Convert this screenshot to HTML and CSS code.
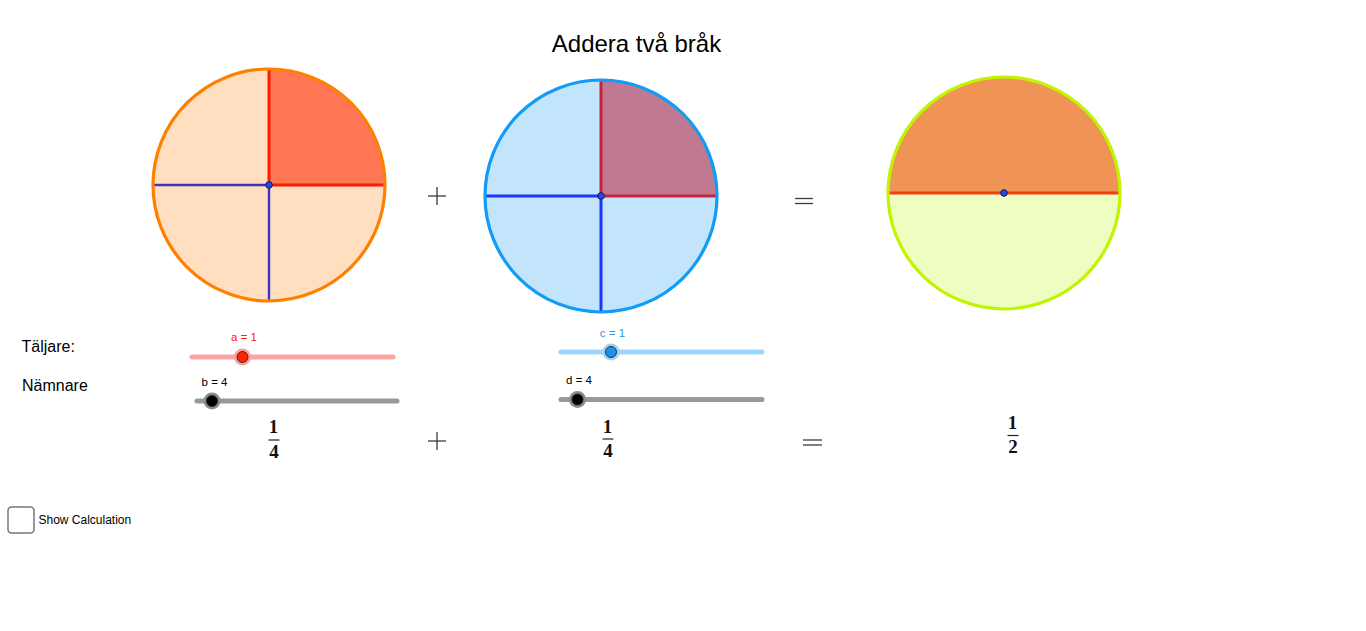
FILE: index.html
```html
<!DOCTYPE html>
<html lang="sv">
<head>
<meta charset="utf-8">
<title>Addera två bråk</title>
<link rel="stylesheet" href="styles.css">
</head>
<body>
<main class="applet">
<svg class="canvas" viewBox="0 0 1366 631" width="1366" height="631" xmlns="http://www.w3.org/2000/svg">
  <text class="title" x="636.5" y="52">Addera två bråk</text>

  <!-- Circle 1: a/b -->
  <g class="c1">
    <circle class="fill" cx="269" cy="185" r="116"/>
    <path class="sector" d="M269 185 L269 69 A116 116 0 0 1 385 185 Z"/>
    <line class="red" x1="269" y1="185" x2="269" y2="70"/>
    <line class="red" x1="269" y1="185" x2="384" y2="185"/>
    <line class="blue" x1="269" y1="185" x2="154" y2="185"/>
    <line class="blue" x1="269" y1="185" x2="269" y2="300"/>
    <circle class="rim" cx="269" cy="185" r="116"/>
    <circle class="pt" cx="269" cy="185" r="3.3"/>
  </g>

  <!-- Circle 2: c/d -->
  <g class="c2">
    <circle class="fill" cx="601" cy="196" r="116"/>
    <path class="sector" d="M601 196 L601 80 A116 116 0 0 1 717 196 Z"/>
    <line class="red" x1="601" y1="196" x2="601" y2="81"/>
    <line class="red" x1="601" y1="196" x2="716" y2="196"/>
    <line class="blue" x1="601" y1="196" x2="486" y2="196"/>
    <line class="blue" x1="601" y1="196" x2="601" y2="311"/>
    <circle class="rim" cx="601" cy="196" r="116"/>
    <circle class="pt" cx="601" cy="196" r="3.3"/>
  </g>

  <!-- Circle 3: sum -->
  <g class="c3">
    <circle class="fill" cx="1004" cy="193" r="116"/>
    <path class="sector" d="M888 193 A116 116 0 0 1 1120 193 Z"/>
    <line class="red" x1="889" y1="193" x2="1119" y2="193"/>
    <circle class="rim" cx="1004" cy="193" r="116"/>
    <circle class="pt" cx="1004" cy="193" r="3.3"/>
  </g>

  <!-- operators -->
  <g class="op">
    <line x1="428" y1="196" x2="446" y2="196"/>
    <line x1="437" y1="187" x2="437" y2="205"/>
    <line x1="795" y1="198.5" x2="813" y2="198.5"/>
    <line x1="795" y1="203.5" x2="813" y2="203.5"/>
    <line x1="428" y1="441" x2="446" y2="441"/>
    <line x1="437" y1="432" x2="437" y2="450"/>
    <line x1="803" y1="440" x2="822" y2="440"/>
    <line x1="803" y1="445" x2="822" y2="445"/>
  </g>

  <!-- labels -->
  <text class="lbl" x="21.5" y="352">Täljare:</text>
  <text class="lbl" x="22" y="391">Nämnare</text>

  <!-- slider a -->
  <line class="track track-a" x1="192" y1="357" x2="393" y2="357"/>
  <circle class="halo halo-a" cx="242.5" cy="357" r="8.5"/>
  <circle class="knob knob-a" cx="242.5" cy="357" r="5.5"/>
  <text class="sl sl-a" x="244" y="341">a = 1</text>

  <!-- slider b -->
  <line class="track track-gray" x1="197" y1="401" x2="397" y2="401"/>
  <circle class="halo halo-gray" cx="212" cy="401" r="8.5"/>
  <circle class="knob knob-black" cx="212" cy="401" r="5.5"/>
  <text class="sl" x="214.5" y="385.5">b = 4</text>

  <!-- slider c -->
  <line class="track track-c" x1="561" y1="352" x2="762" y2="352"/>
  <circle class="halo halo-c" cx="611" cy="352" r="8.5"/>
  <circle class="knob knob-c" cx="611" cy="352" r="5.5"/>
  <text class="sl sl-c" x="612.5" y="336.5">c = 1</text>

  <!-- slider d -->
  <line class="track track-gray" x1="561" y1="399.5" x2="762" y2="399.5"/>
  <circle class="halo halo-gray" cx="577.5" cy="399.5" r="8.5"/>
  <circle class="knob knob-black" cx="577.5" cy="399.5" r="5.5"/>
  <text class="sl" x="579" y="384">d = 4</text>

  <!-- fractions -->
  <g class="frac">
    <text x="273.5" y="433">1</text>
    <line x1="268.5" y1="440" x2="279.5" y2="440"/>
    <text x="274" y="458">4</text>

    <text x="607.5" y="432.5">1</text>
    <line x1="602.5" y1="439" x2="613.5" y2="439"/>
    <text x="608" y="457">4</text>

    <text x="1012.5" y="429">1</text>
    <line x1="1007.5" y1="435.5" x2="1018.5" y2="435.5"/>
    <text x="1013" y="453">2</text>
  </g>

  <!-- checkbox -->
  <rect class="check" x="8" y="507" width="26" height="26" rx="3.5"/>
  <text class="check-lbl" x="38.5" y="523.5">Show Calculation</text>
</svg>
</main>
</body>
</html>
```

FILE: styles.css
```css
html, body {
  margin: 0;
  padding: 0;
  background: #ffffff;
  overflow: hidden;
}

.applet {
  width: 1366px;
  height: 631px;
  font-family: "Liberation Sans", Arial, sans-serif;
}

.canvas {
  display: block;
}

.title {
  font-family: "Liberation Sans", Arial, sans-serif;
  font-size: 24px;
  fill: #000000;
  text-anchor: middle;
}

.c1 .fill { fill: #ffdfc0; }
.c1 .sector { fill: #ff7755; }
.c1 .red { stroke: #ff1a00; stroke-width: 3; }
.c1 .blue { stroke: #4030c4; stroke-width: 2.4; }
.c1 .rim { fill: none; stroke: #ff8000; stroke-width: 3.2; }

.c2 .fill { fill: #c2e5fc; }
.c2 .sector { fill: #bf7a91; }
.c2 .red { stroke: #c82240; stroke-width: 3; }
.c2 .blue { stroke: #1a36ff; stroke-width: 3; }
.c2 .rim { fill: none; stroke: #129bf7; stroke-width: 3.2; }

.c3 .fill { fill: #eefdc0; }
.c3 .sector { fill: #ef9455; }
.c3 .red { stroke: #f04010; stroke-width: 3; }
.c3 .rim { fill: none; stroke: #c0f500; stroke-width: 3.2; }

.pt {
  fill: #1e4cf0;
  stroke: #1a1a40;
  stroke-width: 1;
}

.op line {
  stroke: #3c3c3c;
  stroke-width: 1.3;
}

.lbl {
  font-family: "Liberation Sans", Arial, sans-serif;
  font-size: 16px;
  fill: #000000;
}

.track {
  stroke-width: 5;
  stroke-linecap: round;
}
.track-a { stroke: #fca3a3; }
.track-c { stroke: #9dd6fc; }
.track-gray { stroke: #999999; }

.halo-a { fill: #f8a0a0; }
.halo-c { fill: #9ed2f6; }
.halo-gray { fill: #8c8c8c; }

.knob {
  stroke: #333333;
  stroke-width: 1;
}
.knob-a { fill: #ff2200; }
.knob-c { fill: #1e90f0; }
.knob-black { fill: #000000; stroke: #222222; }

.sl {
  font-family: "Liberation Sans", Arial, sans-serif;
  font-size: 11.5px;
  fill: #000000;
  text-anchor: middle;
}
.sl-a { fill: #ff1a00; }
.sl-c { fill: #2b96e0; }

.frac text {
  font-family: "Liberation Serif", "Times New Roman", serif;
  font-weight: bold;
  font-size: 19px;
  fill: #111111;
  text-anchor: middle;
}
.frac line {
  stroke: #222222;
  stroke-width: 1.2;
}

.check {
  fill: #ffffff;
  stroke: #777777;
  stroke-width: 1.5;
}
.check-lbl {
  font-family: "Liberation Sans", Arial, sans-serif;
  font-size: 12px;
  fill: #000000;
}
```
